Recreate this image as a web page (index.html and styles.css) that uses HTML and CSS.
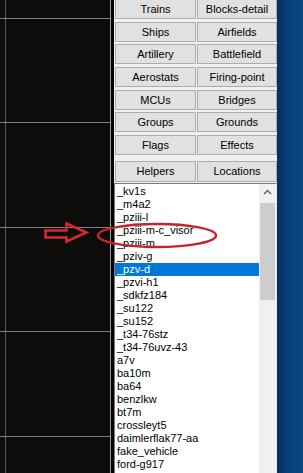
FILE: index.html
```html
<!DOCTYPE html>
<html lang="en">
<head>
  <meta charset="UTF-8">
  <title>Objects</title>
  <link rel="stylesheet" href="styles.css">
</head>
<body>
  <div class="screen">
    <div class="map">
      <svg class="grid" width="114" height="473">
        <rect x="111" y="0" width="3" height="473" fill="#000"/>
        <line x1="5.5" y1="0" x2="5.5" y2="473" stroke="#5a5a5a"/>
        <line x1="110.5" y1="0" x2="110.5" y2="473" stroke="#9a9a9a"/>
        <line x1="0" y1="18.5" x2="110" y2="18.5" stroke="#808080"/>
        <line x1="0" y1="122.5" x2="110" y2="122.5" stroke="#808080"/>
        <line x1="0" y1="227.5" x2="110" y2="227.5" stroke="#808080"/>
        <line x1="0" y1="331.5" x2="110" y2="331.5" stroke="#808080"/>
        <line x1="0" y1="436.5" x2="110" y2="436.5" stroke="#808080"/>
      </svg>
    </div>

    <div class="panel">
      <div class="buttons">
        <button class="btn">Trains</button>
        <button class="btn">Blocks-detail</button>
        <button class="btn">Ships</button>
        <button class="btn">Airfields</button>
        <button class="btn">Artillery</button>
        <button class="btn">Battlefield</button>
        <button class="btn">Aerostats</button>
        <button class="btn">Firing-point</button>
        <button class="btn">MCUs</button>
        <button class="btn">Bridges</button>
        <button class="btn">Groups</button>
        <button class="btn">Grounds</button>
        <button class="btn">Flags</button>
        <button class="btn">Effects</button>
      </div>
      <div class="buttons helpers">
        <button class="btn">Helpers</button>
        <button class="btn">Locations</button>
      </div>

      <div class="listbox">
        <ul class="items">
          <li>_kv1s</li>
          <li>_m4a2</li>
          <li>_pziii-l</li>
          <li>_pziii-m-c_visor</li>
          <li>_pziii-m</li>
          <li>_pziv-g</li>
          <li class="sel">_pzv-d</li>
          <li>_pzvi-h1</li>
          <li>_sdkfz184</li>
          <li>_su122</li>
          <li>_su152</li>
          <li>_t34-76stz</li>
          <li>_t34-76uvz-43</li>
          <li>a7v</li>
          <li>ba10m</li>
          <li>ba64</li>
          <li>benzlkw</li>
          <li>bt7m</li>
          <li>crossleyt5</li>
          <li>daimlerflak77-aa</li>
          <li>fake_vehicle</li>
          <li>ford-g917</li>
        </ul>
        <div class="scrollbar">
          <div class="sb-up">
            <svg width="9" height="6" viewBox="0 0 9 6">
              <polyline points="1,5 4.5,1.5 8,5" fill="none" stroke="#606060" stroke-width="1.4"/>
            </svg>
          </div>
          <div class="sb-thumb"></div>
        </div>
      </div>
    </div>

    <div class="desktop"></div>

    <!-- red markup drawn over the screenshot -->
    <svg class="markup" width="303" height="473">
      <polygon points="45.5,230.5 66.5,230.5 66.5,223.5 86.5,232.5 66.5,241.5 66.5,237.5 45.5,237.5"
               fill="none" stroke="#d42a30" stroke-width="2.5" stroke-linejoin="miter"/>
      <ellipse cx="157" cy="235.5" rx="59" ry="11.5" fill="none" stroke="#c8232b" stroke-width="2.5"/>
    </svg>
  </div>
</body>
</html>
```

FILE: styles.css
```css
body {
  margin: 0;
  background: #000;
  font-family: "Liberation Sans", Arial, sans-serif;
  font-size: 11px;
}
.screen {
  position: relative;
  display: flex;
  width: 303px;
  height: 473px;
  overflow: hidden;
}
.map {
  width: 114px;
  flex: none;
  background: #0d0c0a;
}
.grid {
  display: block;
}
.panel {
  width: 163px;
  flex: none;
  display: flex;
  flex-direction: column;
  background: #f0f0f0;
}
.buttons {
  display: grid;
  grid-template-columns: 81px 80px;
  grid-auto-rows: 20px;
  column-gap: 1px;
  row-gap: 2.67px;
  margin-top: -1px;
  padding-left: 1px;
}
.helpers {
  margin-top: 6px;
  grid-auto-rows: 21px;
}
.btn {
  padding: 0;
  border: 1px solid #adadad;
  background: #e1e1e1;
  color: #000;
  font-family: "Liberation Sans", Arial, sans-serif;
  font-size: 11px;
  font-weight: 400;
}
.listbox {
  flex: 1;
  display: flex;
  margin-top: 1px;
  border: 1px solid #7a7a7a;
  border-right-color: #e8e8e8;
  border-bottom: none;
  background: #fff;
}
.items {
  flex: 1;
  list-style: none;
  margin: 0;
  padding: 1px 0 0 0;
}
.items li {
  height: 13px;
  line-height: 13px;
  padding-left: 2px;
  white-space: nowrap;
  color: #000;
}
.items li.sel {
  background: #0078d7;
  color: #fff;
}
.scrollbar {
  width: 17px;
  display: flex;
  flex-direction: column;
  align-items: center;
  background: #f0f0f0;
}
.sb-up {
  height: 17px;
  display: flex;
  align-items: center;
  justify-content: center;
}
.sb-thumb {
  width: 15px;
  height: 97px;
  margin-top: 2px;
  background: #cdcdcd;
}
.desktop {
  flex: 1;
  background: linear-gradient(90deg, #062f60 0%, #093e78 40%, #0b4885 100%);
}
.markup {
  position: absolute;
  left: 0;
  top: 0;
  pointer-events: none;
}
```
